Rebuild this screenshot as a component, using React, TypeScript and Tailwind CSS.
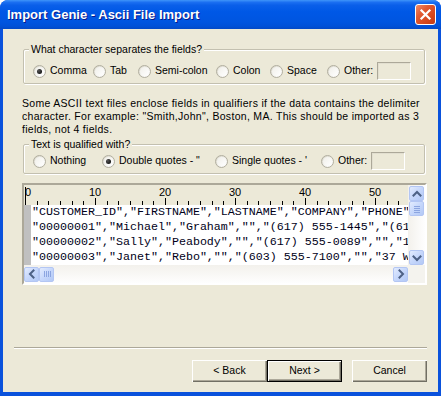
import React from 'react';

const rows = [
  '"CUSTOMER_ID","FIRSTNAME","LASTNAME","COMPANY","PHONE","FAX","ADDRESS"',
  '"00000001","Michael","Graham","","(617) 555-1445","(617) 555-1446",""',
  '"00000002","Sally","Peabody","","(617) 555-0089","","12 Main St"',
  '"00000003","Janet","Rebo","","(603) 555-7100","","37 West St"',
];

const Radio: React.FC<{ checked?: boolean }> = ({ checked }) => (
  <span className="w-[13px] h-[13px] shrink-0 rounded-full border border-[#b2afa0] bg-[linear-gradient(135deg,#d4d1c4_0%,#f2f1ec_55%,#ffffff_100%)] flex items-center justify-center">
    <span className="w-[9px] h-[9px] rounded-full bg-[linear-gradient(135deg,#f0efe9,#ffffff)] flex items-center justify-center">
      {checked && <span className="w-[5px] h-[5px] rounded-full bg-[radial-gradient(circle_at_35%_35%,#555,#000)]" />}
    </span>
  </span>
);

const Option: React.FC<{ label: string; checked?: boolean; w: string }> = ({ label, checked, w }) => (
  <label className={`flex items-center gap-[4px] shrink-0 ${w}`}>
    <Radio checked={checked} />
    <span className="whitespace-nowrap">{label}</span>
  </label>
);

const OtherBox = () => (
  <div className="w-[34px] h-[18px] shrink-0 bg-[#ece9d8] border border-t-[#aca899] border-l-[#aca899] border-r-white border-b-white shadow-[inset_1px_1px_0_#e2dfd0]" />
);

const Arrow: React.FC<{ dir: 'up' | 'down' | 'left' | 'right' }> = ({ dir }) => {
  const d = {
    up: 'M1.5 6.5 L5 3 L8.5 6.5',
    down: 'M1.5 3.5 L5 7 L8.5 3.5',
    left: 'M6.5 1.5 L3 5 L6.5 8.5',
    right: 'M3.5 1.5 L7 5 L3.5 8.5',
  }[dir];
  return (
    <div className="w-[15px] h-[15px] rounded-[2px] border border-[#b3c6f3] bg-[linear-gradient(135deg,#e2ebfe_0%,#c6d7fb_50%,#b3c9f6_100%)] flex items-center justify-center shrink-0">
      <svg width="10" height="10" viewBox="0 0 10 10">
        <path d={d} stroke="#4d6185" strokeWidth="2" fill="none" strokeLinecap="square" />
      </svg>
    </div>
  );
};

const Thumb: React.FC<{ vertical?: boolean }> = ({ vertical }) => (
  <div className="w-[15px] h-[15px] rounded-[2px] border border-[#b3c6f3] bg-[linear-gradient(135deg,#e2ebfe_0%,#c6d7fb_50%,#b3c9f6_100%)] flex items-center justify-center shrink-0">
    <svg width="8" height="8" viewBox="0 0 8 8">
      {vertical ? (
        <path d="M1 1.5 H7 M1 3.5 H7 M1 5.5 H7 M1 7.5 H7" stroke="#8ca5e0" strokeWidth="1" />
      ) : (
        <path d="M1.5 1 V7 M3.5 1 V7 M5.5 1 V7 M7.5 1 V7" stroke="#8ca5e0" strokeWidth="1" />
      )}
    </svg>
  </div>
);

const Ruler = () => {
  const step = 70 / 6;
  const ticks = Array.from({ length: 34 }, (_, i) => i);
  const labels = [0, 10, 20, 30, 40, 50];
  return (
    <svg width="384" height="20" className="block">
      {ticks.map((i) => {
        const x = Math.round(1 + i * step) + 0.5;
        const big = i % 6 === 0;
        return <line key={i} x1={x} x2={x} y1={i === 0 ? 2 : big ? 13 : 16} y2={20} stroke="#000" strokeWidth="1" />;
      })}
      {labels.map((l, k) => (
        <text key={l} x={1 + k * 70 + (l === 0 ? 3 : 0)} y={11} fontSize="11" fontFamily="Liberation Sans, Arial, sans-serif" textAnchor="middle" fill="#000">
          {l}
        </text>
      ))}
    </svg>
  );
};

const Button: React.FC<{ label: string; primary?: boolean }> = ({ label, primary }) => (
  <div
    className={`w-[75px] h-[22px] flex items-center justify-center bg-[#ece9d8] ${
      primary
        ? 'border border-black shadow-[inset_1px_1px_0_#fff,inset_-1px_-1px_0_#716f64,inset_-2px_-2px_0_#aca899]'
        : 'shadow-[inset_1px_1px_0_#fff,inset_-1px_-1px_0_#716f64,inset_-2px_-2px_0_#aca899]'
    }`}
  >
    {label}
  </div>
);

export default function App() {
  return (
    <div className="w-[441px] h-[396px] bg-white">
      <div className="w-[441px] h-[396px] rounded-t-[8px] overflow-hidden bg-[#0a52dc] flex flex-col font-['Liberation_Sans',Arial,sans-serif] text-[10.5px] text-black">
        {/* title bar */}
        <div className="h-[29px] shrink-0 flex items-center pl-[7px] pr-[5px] bg-[linear-gradient(to_bottom,#3f95f9_0%,#1b6ff1_8%,#0a5fe9_18%,#0058e6_40%,#0055e0_75%,#0051d8_90%,#0349c6_100%)]">
          <span className="text-white text-[13px] font-bold [text-shadow:1px_1px_0_#0a1a88] leading-none">Import Genie - Ascii File Import</span>
          <div className="ml-auto w-[21px] h-[21px] rounded-[3px] border border-white bg-[linear-gradient(135deg,#f08c6a_0%,#e25a32_35%,#d2441a_75%,#c23c15_100%)] flex items-center justify-center">
            <svg width="13" height="13" viewBox="0 0 13 13">
              <path d="M2.5 2.5 L10.5 10.5 M10.5 2.5 L2.5 10.5" stroke="#fff" strokeWidth="2.2" strokeLinecap="square" />
            </svg>
          </div>
        </div>

        <div className="flex-1 px-[3px] pb-[4px] flex">
          <div className="flex-1 bg-[#ece9d8] flex flex-col pl-[19px] pr-[11px]">
            {/* separator group */}
            <fieldset className="mt-[14px] ml-[1px] mr-[2px] border border-[#c3c0b0] rounded-[2px] shadow-[inset_1px_1px_0_#fff,1px_1px_0_#fff]">
              <legend className="ml-[5px] px-[2px] leading-[13px] bg-[#ece9d8]">What character separates the fields?</legend>
              <div className="flex items-center h-[18px] mt-[6px] mb-[3px] pl-[9px]">
                <Option label="Comma" checked w="w-[60px]" />
                <Option label="Tab" w="w-[45px]" />
                <Option label="Semi-colon" w="w-[78px]" />
                <Option label="Colon" w="w-[54px]" />
                <Option label="Space" w="w-[57px]" />
                <Option label="Other:" w="w-[50px]" />
                <OtherBox />
              </div>
            </fieldset>

            <p className="mt-[13px] leading-[13px] whitespace-nowrap tracking-[0.3px]">
              Some ASCII text files enclose fields in qualifiers if the data contains the delimiter
              <br />
              character. For example: "Smith,John", Boston, MA. This should be imported as 3
              <br />
              fields, not 4 fields.
            </p>

            {/* qualifier group */}
            <fieldset className="mt-[2px] ml-[1px] mr-[2px] border border-[#c3c0b0] rounded-[2px] shadow-[inset_1px_1px_0_#fff,1px_1px_0_#fff]">
              <legend className="ml-[5px] px-[2px] leading-[13px] bg-[#ece9d8]">Text is qualified with?</legend>
              <div className="flex items-center h-[18px] mt-[1px] mb-[3px] pl-[9px]">
                <Option label="Nothing" w="w-[69px]" />
                <Option label={'Double quotes - "'} checked w="w-[113px]" />
                <Option label="Single quotes - '" w="w-[106px]" />
                <Option label="Other:" w="w-[50px]" />
                <OtherBox />
              </div>
            </fieldset>

            {/* preview grid */}
            <div className="mt-[9px] h-[102px] border-2 border-t-[#aca899] border-l-[#aca899] border-r-white border-b-white flex">
              <div className="w-[384px] flex flex-col">
                <div className="h-[20px] bg-[#ece9d8] overflow-hidden">
                  <Ruler />
                </div>
                <div className="h-[60px] flex bg-white">
                  <div className="w-[7px] bg-[#c0c0c0] shrink-0" />
                  <div className="flex-1 overflow-hidden pl-[1px] font-['Liberation_Mono','Courier_New',monospace] text-[11.67px] leading-[15px] text-[#000018]">
                    {rows.map((r, i) => (
                      <div key={i} className="whitespace-pre h-[15px]">
                        {r}
                      </div>
                    ))}
                  </div>
                </div>
                <div className="h-[18px] flex items-center bg-[linear-gradient(to_bottom,#f3f1ec,#fefefe)]">
                  <Arrow dir="left" />
                  <Thumb />
                  <div className="flex-1" />
                  <Arrow dir="right" />
                </div>
              </div>
              <div className="flex-1 flex flex-col">
                <div className="h-[80px] flex flex-col items-center bg-[linear-gradient(to_right,#f3f1ec,#fefefe)] pt-[1px]">
                  <Arrow dir="up" />
                  <Thumb vertical />
                  <div className="flex-1" />
                  <Arrow dir="down" />
                </div>
                <div className="flex-1 bg-[#f4f3ee]" />
              </div>
            </div>

            {/* separator line */}
            <div className="mt-[62px] -ml-[8px] h-[2px] border-t border-t-[#aca899] border-b border-b-white" />

            {/* buttons */}
            <div className="mt-[11px] flex justify-end h-[22px]">
              <Button label="< Back" />
              <Button label="Next >" primary />
              <div className="w-[10px]" />
              <Button label="Cancel" />
            </div>
          </div>
        </div>
      </div>
    </div>
  );
}
